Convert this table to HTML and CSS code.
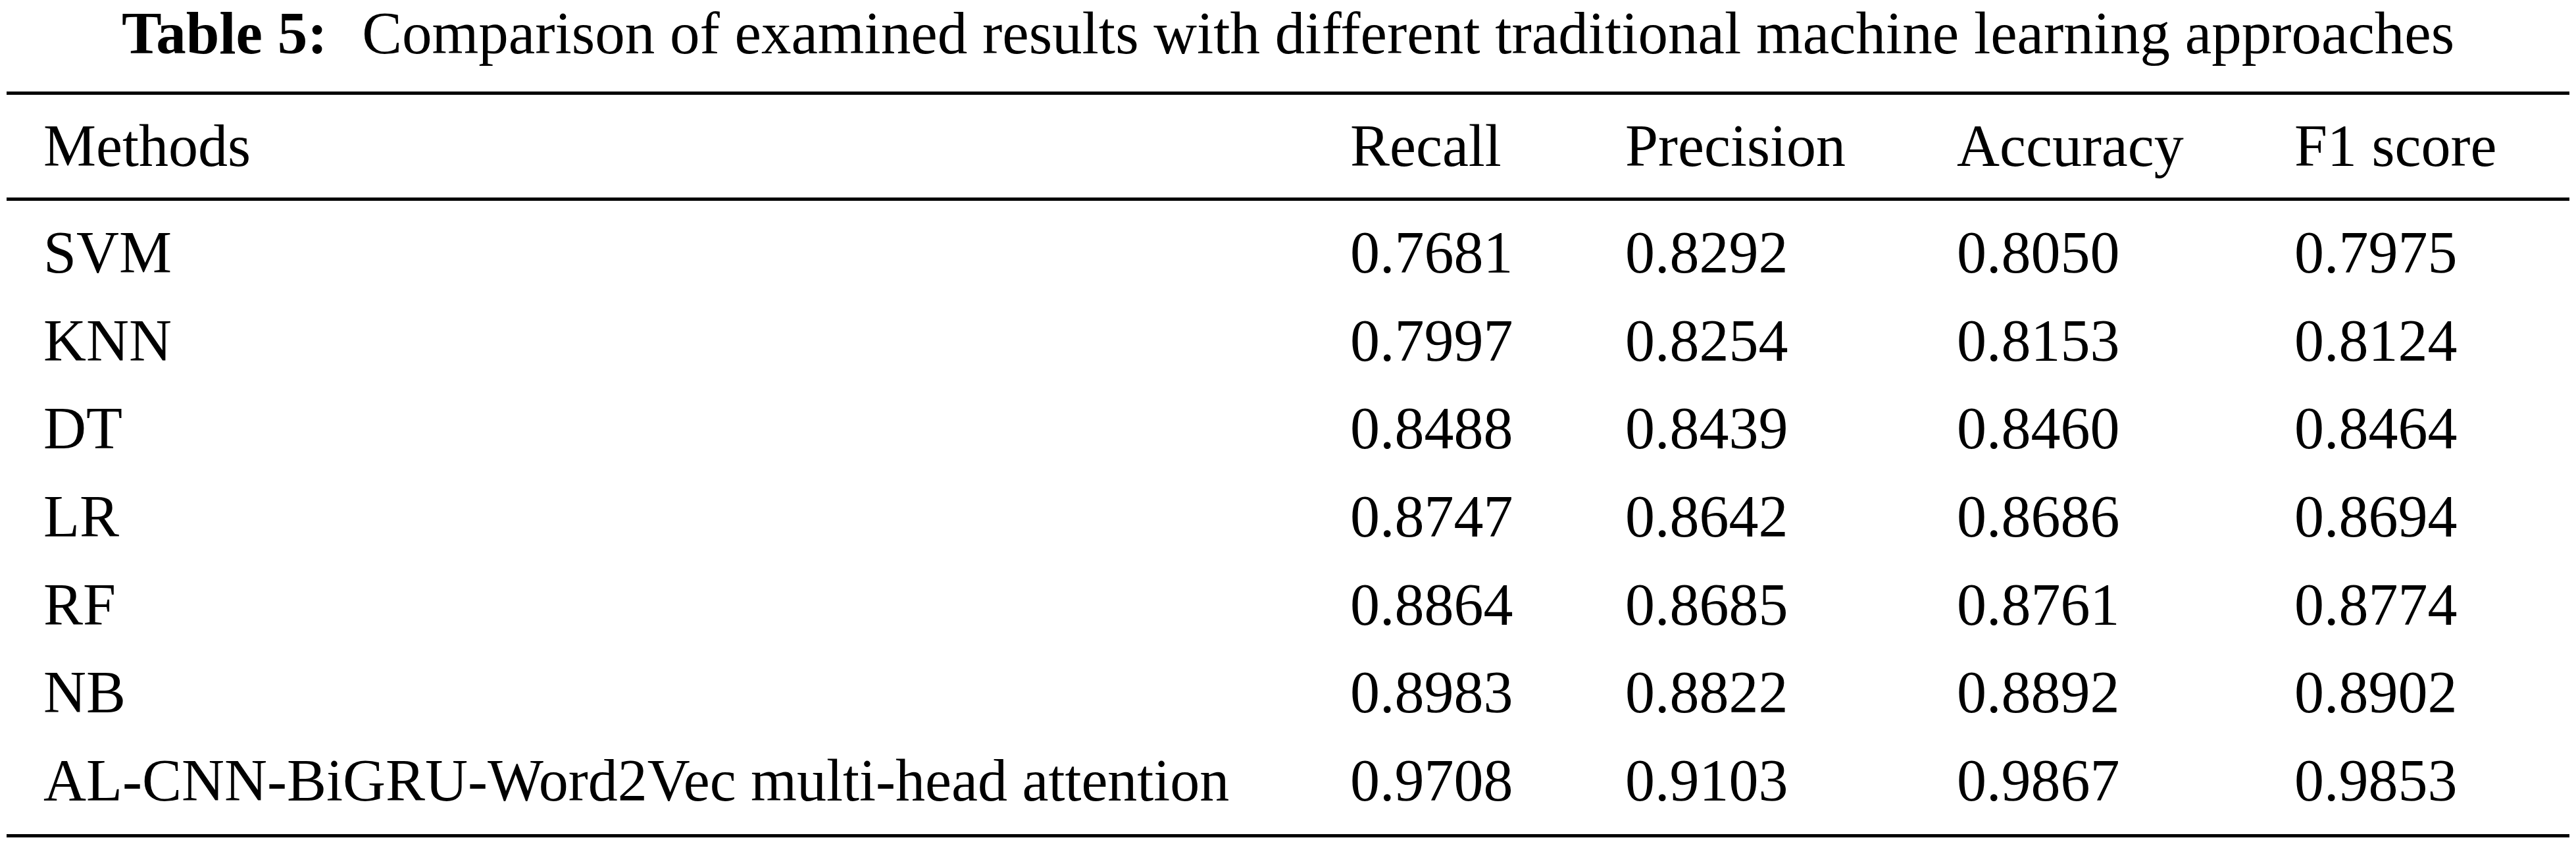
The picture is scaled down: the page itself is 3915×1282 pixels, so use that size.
FILE: index.html
```html
<!DOCTYPE html>
<html lang="en">
<head>
<meta charset="utf-8">
<title>Table 5</title>
<link rel="stylesheet" href="styles.css">
</head>
<body>
<div class="figure">
  <p class="caption"><b class="caption-label">Table 5:</b> Comparison of examined results with different traditional machine learning approaches</p>
  <table class="results">
    <colgroup>
      <col class="c-method">
      <col class="c-recall">
      <col class="c-precision">
      <col class="c-accuracy">
      <col class="c-f1">
    </colgroup>
    <thead>
      <tr><th>Methods</th><th>Recall</th><th>Precision</th><th>Accuracy</th><th>F1 score</th></tr>
    </thead>
    <tbody>
      <tr><td>SVM</td><td>0.7681</td><td>0.8292</td><td>0.8050</td><td>0.7975</td></tr>
      <tr><td>KNN</td><td>0.7997</td><td>0.8254</td><td>0.8153</td><td>0.8124</td></tr>
      <tr><td>DT</td><td>0.8488</td><td>0.8439</td><td>0.8460</td><td>0.8464</td></tr>
      <tr><td>LR</td><td>0.8747</td><td>0.8642</td><td>0.8686</td><td>0.8694</td></tr>
      <tr><td>RF</td><td>0.8864</td><td>0.8685</td><td>0.8761</td><td>0.8774</td></tr>
      <tr><td>NB</td><td>0.8983</td><td>0.8822</td><td>0.8892</td><td>0.8902</td></tr>
      <tr><td>AL-CNN-BiGRU-Word2Vec multi-head attention</td><td>0.9708</td><td>0.9103</td><td>0.9867</td><td>0.9853</td></tr>
    </tbody>
  </table>
</div>
</body>
</html>
```

FILE: styles.css
```css
html, body {
  margin: 0;
  padding: 0;
  background: #ffffff;
}

body {
  font-family: "Liberation Serif", "Times New Roman", serif;
  font-size: 90px;
  color: #000000;
}

.figure {
  padding: 0 10px;
}

.caption {
  margin: 0 0 38px 0;
  padding-top: 1px;
  font-size: 91px;
  line-height: 100px;
  text-align: center;
  white-space: nowrap;
}

.caption-label {
  font-weight: bold;
  margin-right: 30px;
}

.results {
  width: 100%;
  table-layout: fixed;
  border-collapse: separate;
  border-spacing: 0;
}

.c-method { width: 2042px; }
.c-recall { width: 418px; }
.c-precision { width: 504px; }
.c-accuracy { width: 513px; }
.c-f1 { width: auto; }

.results th,
.results td {
  padding: 0;
  text-align: left;
  font-weight: normal;
  line-height: 133.67px;
  white-space: nowrap;
  vertical-align: baseline;
}

.results th:first-child,
.results td:first-child {
  padding-left: 56px;
}

.results th {
  border-top: 5px solid #000;
  border-bottom: 5px solid #000;
  padding-top: 11px;
  padding-bottom: 11px;
  line-height: 134px;
}

.results tbody tr:first-child td {
  padding-top: 12px;
}

.results tbody tr:last-child td {
  padding-bottom: 14px;
  border-bottom: 5px solid #000;
}
```
